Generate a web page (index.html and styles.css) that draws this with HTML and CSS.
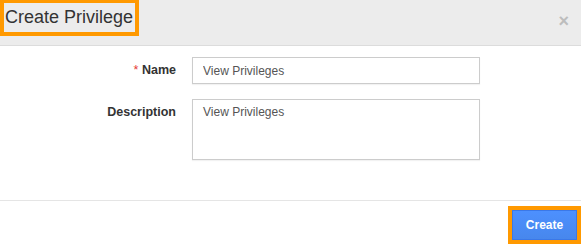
FILE: index.html
```html
<!DOCTYPE html>
<html lang="en">
<head>
    <meta charset="UTF-8">
    <title>Create Privilege</title>
    <link rel="stylesheet" href="styles.css">
</head>
<body>
<div class="modal">
    <div class="modal-header">
        <h4 class="modal-title">Create Privilege</h4>
        <span class="close">&times;</span>
    </div>

    <div class="modal-body">
        <div class="form-row">
            <label for="name"><span class="required">*</span> Name</label>
            <input id="name" type="text" value="View Privileges">
        </div>
        <div class="form-row">
            <label for="description">Description</label>
            <textarea id="description">View Privileges</textarea>
        </div>
    </div>

    <div class="modal-footer">
        <span class="highlight-box">
            <button class="btn-primary">Create</button>
        </span>
    </div>
</div>
</body>
</html>
```

FILE: styles.css
```css
body {
    margin: 0;
    font-family: 'Liberation Sans', Arial, sans-serif;
    font-size: 12px;
    color: #333;
    background: #fff;
}

.modal-header {
    display: flex;
    justify-content: space-between;
    align-items: flex-start;
    height: 46px;
    box-sizing: border-box;
    background-color: #ececec;
    border-bottom: 1px solid #dcdcdc;
}

.modal-title {
    margin: 0;
    padding: 0 2px 0 1px;
    border: 4px solid #ff9900;
    border-top-width: 3px;
    font-size: 18px;
    font-weight: normal;
    line-height: 29px;
    color: #333;
}

.close {
    margin: 12px 12px 0 0;
    font-size: 18px;
    font-weight: bold;
    line-height: 18px;
    color: #bdbdbd;
}

.modal-body {
    padding: 11px 0 40px;
}

.form-row {
    display: grid;
    grid-template-columns: 176px 288px;
    column-gap: 16px;
    margin-bottom: 15px;
}

.form-row:last-child {
    margin-bottom: 0;
}

.form-row label {
    text-align: right;
    font-size: 12.5px;
    font-weight: bold;
    padding-top: 6px;
}

.required {
    color: #e53935;
    font-weight: normal;
}

input,
textarea {
    box-sizing: border-box;
    width: 288px;
    margin: 0;
    padding: 5px 10px;
    border: 1px solid #ccc;
    border-radius: 0;
    font-family: 'Liberation Sans', Arial, sans-serif;
    font-size: 12px;
    color: #555;
    box-shadow: 0 1px 1px rgba(0, 0, 0, 0.05);
}

input {
    height: 27px;
}

textarea {
    height: 61px;
    resize: none;
}

.modal-footer {
    display: flex;
    justify-content: flex-end;
    padding: 5px 0 3px;
    border-top: 1px solid #e5e5e5;
}

.highlight-box {
    display: block;
    border: 4px solid #ff9900;
}

.btn-primary {
    display: block;
    width: 65px;
    height: 30px;
    border: 1px solid #3b78e7;
    background: linear-gradient(#4d90fe, #4787ed);
    color: #fff;
    font-family: 'Liberation Sans', Arial, sans-serif;
    font-size: 12px;
    font-weight: bold;
    cursor: pointer;
}
```
